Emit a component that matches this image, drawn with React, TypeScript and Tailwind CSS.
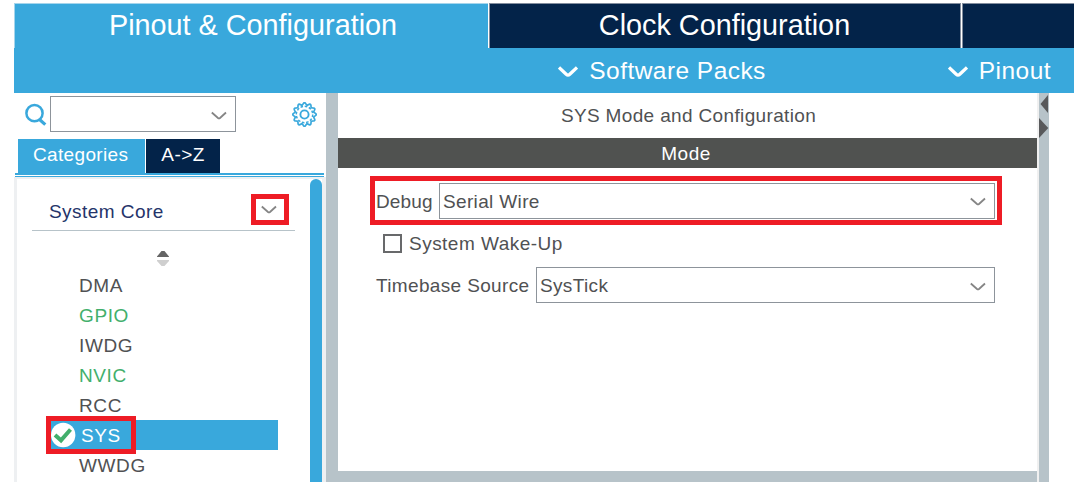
import React from "react";

type Peripheral = { name: string; active?: boolean; selected?: boolean };

const peripherals: Peripheral[] = [
  { name: "DMA" },
  { name: "GPIO", active: true },
  { name: "IWDG" },
  { name: "NVIC", active: true },
  { name: "RCC" },
  { name: "SYS", selected: true },
  { name: "WWDG" },
];

function Chevron({ className = "" }: { className?: string }) {
  return (
    <svg width="16" height="10" viewBox="0 0 16 10" fill="none" stroke="#858585" strokeWidth="1.8" className={className}>
      <path d="M0.8 1.5L7 7Q8 7.8 9 7L15 1.5" />
    </svg>
  );
}

function MenuItem({ label }: { label: string }) {
  return (
    <div className="flex items-center text-[24.5px] leading-[45px] tracking-[0.45px] whitespace-nowrap text-white">
      <svg width="20" height="12" viewBox="0 0 20 12" fill="none" stroke="#fff" strokeWidth="3.3" className="mt-[3px] mr-[11px]">
        <path d="M1 1.5L8.2 8.2Q10 9.8 11.8 8.2L19 1.5" />
      </svg>
      {label}
    </div>
  );
}

function Combo({ value, className }: { value: string; className: string }) {
  return (
    <div className={`flex h-9 items-center justify-between border border-[#8d949b] bg-white pl-[3px] ${className}`}>
      <span className="pt-[2px]">{value}</span>
      <Chevron className="mt-[3px] mr-[8px]" />
    </div>
  );
}

function Gear() {
  const teeth = Array.from({ length: 96 }, (_, i) => {
    const a = (i / 96) * Math.PI * 2;
    const r = 10.7 + 1.1 * Math.cos(a * 12);
    return `${(12.5 + r * Math.cos(a)).toFixed(2)},${(12.5 + r * Math.sin(a)).toFixed(2)}`;
  }).join(" ");
  return (
    <svg width="25" height="25" viewBox="0 0 25 25" fill="none" stroke="#39a8dc">
      <polygon points={teeth} strokeWidth="1.7" />
      <circle cx="12.5" cy="12.5" r="8.2" strokeWidth="1.5" strokeDasharray="2.6 1.69" />
      <circle cx="12.5" cy="12.5" r="4.1" strokeWidth="1.9" />
    </svg>
  );
}

function Sidebar() {
  return (
    <aside className="flex w-[312px] shrink-0 flex-col">
      <div className="flex h-[46px] items-start pt-[3px] pl-[10px]">
        <svg width="26" height="26" viewBox="0 0 26 26" fill="none" stroke="#39a8dc" className="mt-[6px]">
          <circle cx="10.5" cy="11.2" r="8.1" strokeWidth="2.5" />
          <path d="M15.5 17.5L21.3 22.6" strokeWidth="3.2" />
        </svg>
        <Combo value="" className="w-[186px]" />
        <div className="mt-[6px] ml-[56px]">
          <Gear />
        </div>
      </div>
      <div className="flex h-[34px] gap-px pl-1 leading-[31px] text-white">
        <div className="w-[127px] bg-[#39a8dc] pl-[15px]">Categories</div>
        <div className="w-[74px] bg-[#032349] text-center tracking-[0.4px]">A-&gt;Z</div>
      </div>
      <div className="ml-px h-1 w-[309px] border-t-2 border-b border-[#39a8dc]" />
      <div className="flex min-h-0 flex-1 border-t-2 border-l-[3px] border-[#eef0f2]">
        <div className="w-[293px] shrink-0">
          <div className="relative ml-[15px] flex h-[52px] w-[263px] items-center border-b border-[#b7c3c9] pt-[14px] pl-[17px] tracking-[0.45px] text-[#25346a]">
            System Core
            <div className="absolute top-[15px] left-[219px] flex h-[31px] w-[38px] items-center justify-center border-[5px] border-[#ee1c25]">
              <Chevron className="ml-[-2px]" />
            </div>
          </div>
          <div className="flex h-[40px] justify-center pt-[19px] pr-[2px]">
            <svg width="14" height="17" viewBox="0 0 14 17">
              <path d="M1 6.5L5.5 1h3L13 6.5V7H1z" fill="#656565" />
              <path d="M1 10h12v1L8.5 16h-3L1 11z" fill="#cfcfcf" />
            </svg>
          </div>
          <ul className="leading-[30px] tracking-[0.6px] text-[#505153]">
            {peripherals.map((p) =>
              p.selected ? (
                <li key={p.name} className="relative mt-[-1px] mb-px ml-[30px] flex h-[30px] w-[231px] bg-[#39a8dc] pl-[34px] text-white">
                  <span className="pt-px">{p.name}</span>
                  <svg width="25" height="26" viewBox="0 0 25 26" className="absolute top-[2px] left-[4px]">
                    <circle cx="12.2" cy="13" r="12.2" fill="#fff" />
                    <path d="M4 13L10 18.3L19.5 7.5" fill="none" stroke="#42af6c" strokeWidth="4" />
                  </svg>
                  <div className="absolute top-[-4px] left-[-1px] h-[38px] w-[90px] border-[5px] border-[#ee1c25]" />
                </li>
              ) : (
                <li key={p.name} className={p.active ? "h-[30px] pl-[62px] text-[#42af6c]" : "h-[30px] pl-[62px]"}>
                  {p.name}
                </li>
              )
            )}
          </ul>
        </div>
        <div className="w-3 rounded-t-[6px] bg-[#39a8dc]" />
        <div className="flex-1 bg-[#eef0f2]" />
      </div>
    </aside>
  );
}

function ModePanel() {
  return (
    <main className="flex w-[699px] shrink-0 flex-col border-b-[11px] border-[#b7c3c9]">
      <h1 className="pl-[2px] text-center leading-[45px]">SYS Mode and Configuration</h1>
      <h2 className="h-[30px] bg-[#505250] pr-[3px] text-center leading-[32px] tracking-[0.5px] text-white">Mode</h2>
      <div className="ml-8 mt-2 flex h-[49px] w-[632px] items-center border-[5px] border-[#ee1c25] pl-px">
        <span className="w-[63px] pt-[2px] tracking-[0.15px]">Debug</span>
        <Combo value="Serial Wire" className="w-[556px]" />
      </div>
      <div className="mt-[3px] ml-[45px] flex h-[31px] items-center tracking-[0.48px]">
        <div className="mr-[7px] h-[19px] w-[19px] border-2 border-[#68696b]" />
        System Wake-Up
      </div>
      <div className="mt-2 ml-[38px] flex items-center">
        <span className="w-[160px] pt-[2px]">Timebase Source</span>
        <Combo value="SysTick" className="w-[459px]" />
      </div>
    </main>
  );
}

export default function App() {
  return (
    <div className="flex h-[482px] w-[1074px] flex-col overflow-hidden bg-white pt-[3px] pl-[14px] font-['Liberation_Sans',Arial,sans-serif] text-[19px] leading-[30px] tracking-[0.35px] text-[#505153]">
      <nav className="flex h-[45px] shrink-0 text-center text-[28.8px] leading-[42px] tracking-normal text-white">
        <div className="w-[474px] border-t border-l border-[#a5d5ec] bg-[#39a8dc] pl-[3px]">Pinout &amp; Configuration</div>
        <div className="ml-px w-[472px] border-x border-t border-[#828d9e] bg-[#032349] pr-px">Clock Configuration</div>
        <div className="ml-px flex-1 border-t border-l border-[#828d9e] bg-[#032349]" />
      </nav>
      <div className="flex h-[45px] shrink-0 justify-end bg-[#39a8dc] pr-[23px]">
        <MenuItem label="Software Packs" />
        <div className="w-[182px]" />
        <MenuItem label="Pinout" />
      </div>
      <div className="flex min-h-0 flex-1">
        <Sidebar />
        <div className="w-3 shrink-0 bg-[#b7c3c9]" />
        <ModePanel />
        <div className="w-[12px] shrink-0 border-l-2 border-[#f0f0f0] bg-[#b7c3c9]">
          <svg width="10" height="46" viewBox="0 0 10 46">
            <path d="M9 2v18L1.5 11z" fill="#58595b" />
            <path d="M0 25v20L9.3 35z" fill="#58595b" />
          </svg>
        </div>
      </div>
    </div>
  );
}
